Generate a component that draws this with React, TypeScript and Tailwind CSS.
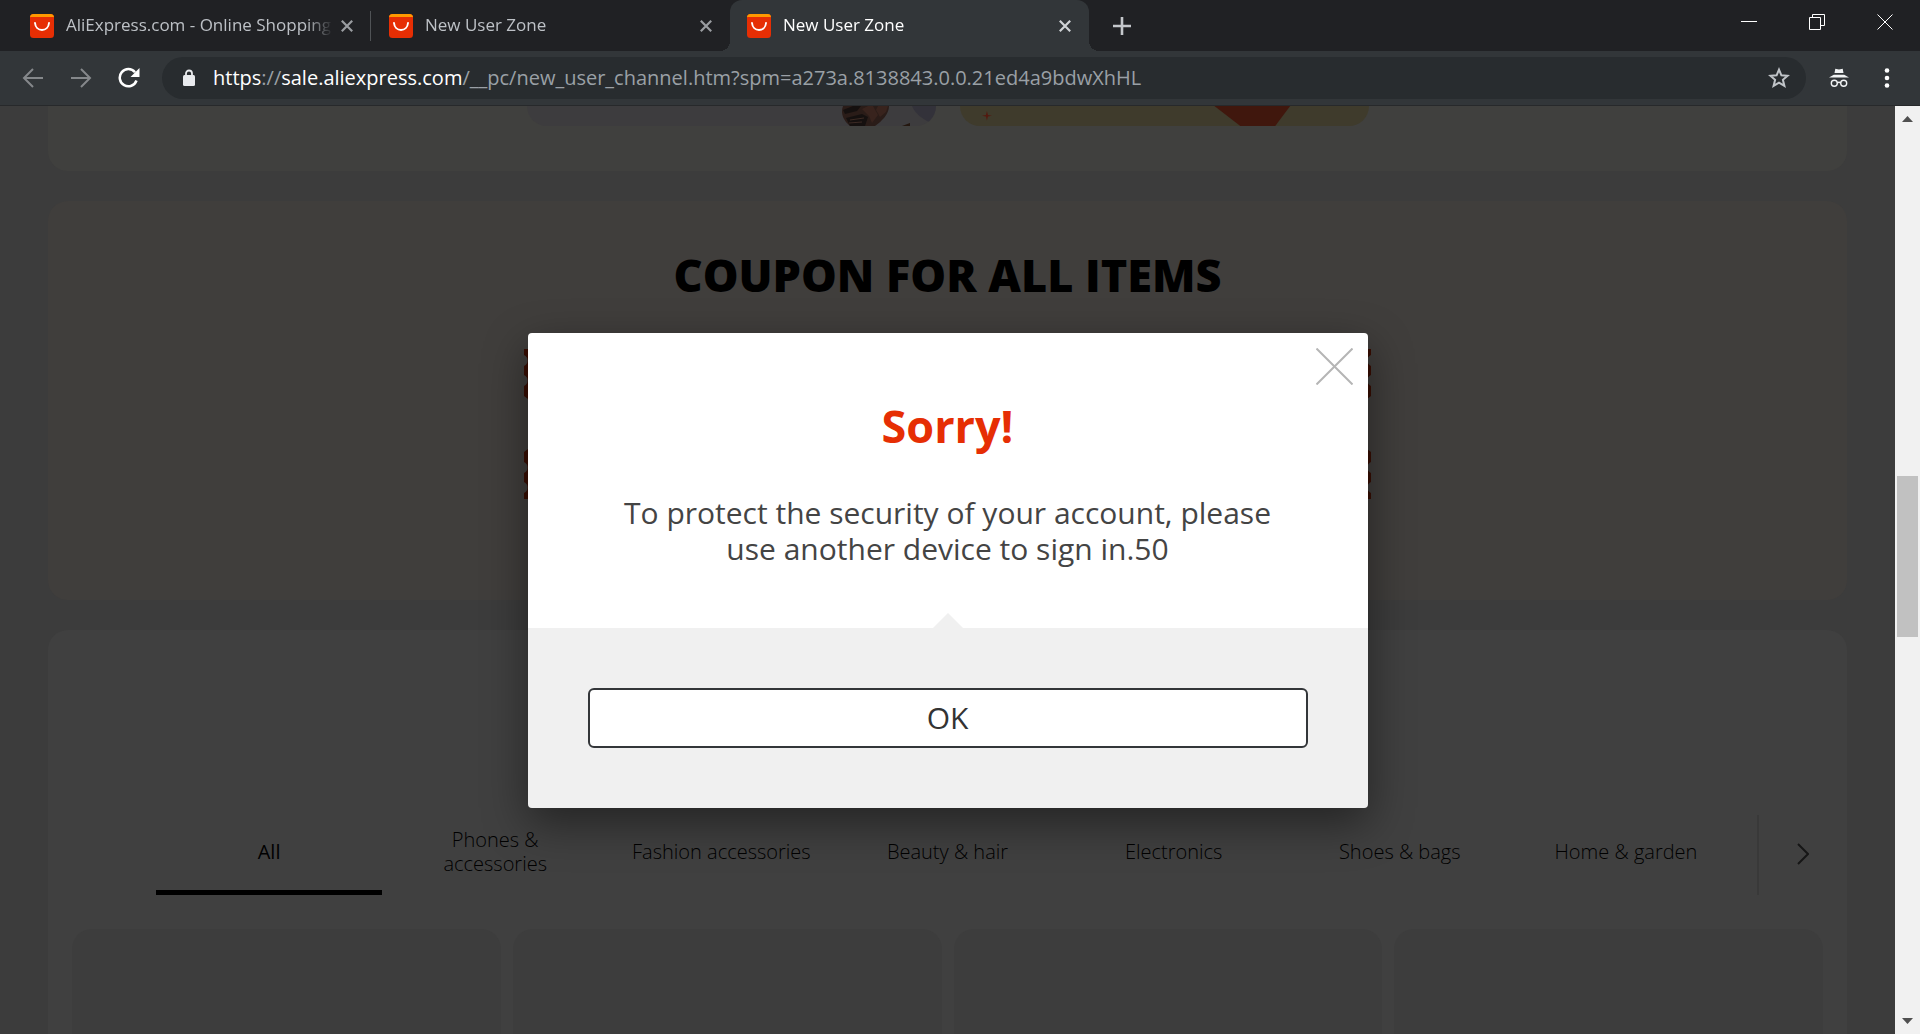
import { useState } from "react";

const categories = ["All", "Phones & accessories", "Fashion accessories", "Beauty & hair", "Electronics", "Shoes & bags", "Home & garden"];

function Favicon() {
  return (
    <svg className="size-6 shrink-0" viewBox="0 0 24 24" aria-hidden="true">
      <rect width="24" height="24" rx="3.5" fill="#e62e04" />
      <path d="M0 3.5A3.5 3.5 0 0 1 3.500 0h17A3.500 3.500 0 0 1 24 3.500C23.700 3 23 2.900 22 2.900H2C1 2.900.3 3 0 3.500z" fill="#ff9900" />
      <path d="M5 9c.4 4.300 3.300 7 7 7s6.600-2.700 7-7" fill="none" stroke="#fff" strokeWidth="1.900" strokeLinecap="round" />
    </svg>
  );
}

function Cross() {
  return (
    <svg className="size-3" viewBox="0 0 12 12" aria-hidden="true">
      <path d="M.8.8l10.400 10.400M11.200.8L.8 11.200" stroke="currentColor" strokeWidth="2.200" />
    </svg>
  );
}

function BrowserTab({ title, active = false, divider = false }: { title: string; active?: boolean; divider?: boolean }) {
  return (
    <div
      className={
        active
          ? "relative flex h-full w-[359px] items-center rounded-t-xl bg-[#323639] pr-[18px] pl-[17px] text-white"
          : "relative flex h-full w-[359px] items-center pr-[18px] pl-[18px] text-[#bdc1c6]"
      }
    >
      {active && (
        <>
          <span className="absolute bottom-0 -left-2.5 size-2.5 bg-[radial-gradient(circle_at_0_0,transparent_10px,#323639_10px)]" />
          <span className="absolute -right-2.5 bottom-0 size-2.5 bg-[radial-gradient(circle_at_100%_0,transparent_10px,#323639_10px)]" />
        </>
      )}
      <Favicon />
      <span className="ml-3 h-6 min-w-0 flex-1 overflow-hidden pb-0.5 text-[17px] leading-[22px] whitespace-nowrap [mask-image:linear-gradient(to_right,#000_90%,transparent)]">
        {title}
      </span>
      <button type="button" aria-label={`Close ${title}`} className={active ? "ml-2 text-[#d0d3d6]" : "ml-2 text-[#9a9da1]"}>
        <Cross />
      </button>
      {divider && <span className="absolute top-[11px] right-0 h-[30px] w-px bg-[#505356]" />}
    </div>
  );
}

function TitleBar() {
  return (
    <div className="flex h-[51px] shrink-0 items-center bg-[#202124] pl-3">
      <BrowserTab title="AliExpress.com - Online Shopping" divider />
      <BrowserTab title="New User Zone" />
      <BrowserTab title="New User Zone" active />
      <button type="button" aria-label="New tab" className="ml-6 text-[#c4c7cb]">
        <svg className="size-[18px]" viewBox="0 0 18 18" aria-hidden="true">
          <path d="M9 0v18M0 9h18" stroke="currentColor" strokeWidth="2.600" />
        </svg>
      </button>
      <div className="ml-auto flex items-center gap-[52px] pr-[27px] pb-2 text-white">
        <button type="button" aria-label="Minimize">
          <svg className="size-4" viewBox="0 0 16 16" aria-hidden="true"><path d="M0 7.500h16" stroke="currentColor" /></svg>
        </button>
        <button type="button" aria-label="Restore">
          <svg className="size-4" viewBox="0 0 16 16" fill="none" stroke="currentColor" aria-hidden="true">
            <path d="M.5 3.500h11v12H.5zM3.500 3.500v-3h12v11h-4" />
          </svg>
        </button>
        <button type="button" aria-label="Close window">
          <svg className="size-4" viewBox="0 0 16 16" aria-hidden="true"><path d="M.5.5l15 15M15.500.5l-15 15" stroke="currentColor" /></svg>
        </button>
      </div>
    </div>
  );
}

function Toolbar() {
  return (
    <div className="flex h-[55px] shrink-0 items-center border-b border-[#27292b] bg-[#323639] pr-[30px] pl-[22px]">
      <button type="button" aria-label="Back" className="text-[#85888b]">
        <svg className="size-[22px]" viewBox="0 0 22 22" fill="none" stroke="currentColor" strokeWidth="2" aria-hidden="true">
          <path d="M21 11H2.500M11 2l-9 9 9 9" />
        </svg>
      </button>
      <button type="button" aria-label="Forward" className="ml-[26px] text-[#85888b]">
        <svg className="size-[22px]" viewBox="0 0 22 22" fill="none" stroke="currentColor" strokeWidth="2" aria-hidden="true">
          <path d="M1 11h18.500M11 2l9 9-9 9" />
        </svg>
      </button>
      <button type="button" aria-label="Reload" className="ml-[26px] text-white">
        <svg className="size-[22px]" viewBox="0 0 22 22" aria-hidden="true">
          <path d="M18.500 13.500A8.600 8.600 0 1 1 17 5.200" fill="none" stroke="currentColor" strokeWidth="2.500" />
          <path d="M21.500 1v9h-9z" fill="currentColor" />
        </svg>
      </button>
      <div className="ml-[22px] flex h-[42px] flex-1 items-center rounded-full bg-[#282c2f] pr-4 pl-[21px]">
        <svg className="h-[18px] w-3 shrink-0 text-[#e8eaed]" viewBox="0 0 12 18" aria-hidden="true">
          <path d="M3 7V4.500a3 3 0 0 1 6 0V7" fill="none" stroke="currentColor" strokeWidth="1.800" />
          <rect y="6" width="12" height="11" rx="1.500" fill="currentColor" />
        </svg>
        <a href="#page" className="ml-[18px] flex-1 text-[20px] leading-7 whitespace-nowrap text-[#9aa0a6]">
          <span className="text-white">https</span>://<span className="text-white">sale.aliexpress.com</span>
          /__pc/new_user_channel.htm?spm=a273a.8138843.0.0.21ed4a9bdwXhHL
        </a>
        <button type="button" aria-label="Bookmark this page" className="text-[#c0c4c8]">
          <svg className="size-[22px]" viewBox="0 0 22 22" aria-hidden="true">
            <path d="M11 2.600l2.400 5.700 6.200.5-4.700 4 1.500 6.100-5.400-3.300-5.400 3.300 1.500-6.100-4.700-4 6.200-.5z" fill="none" stroke="currentColor" strokeWidth="2" />
          </svg>
        </button>
      </div>
      <svg className="ml-[23px] size-5 text-[#f1f3f4]" viewBox="0 0 20 20" aria-label="Incognito" role="img">
        <path d="M5.500 5L6.300.7 10 1.400l3.700-.7.800 4.300zM0 9.500L4.800 6.800h10.400L20 9.500z" fill="currentColor" />
        <g fill="none" stroke="currentColor" strokeWidth="1.400">
          <circle cx="5.300" cy="15.300" r="3" />
          <circle cx="14.700" cy="15.300" r="3" />
          <path d="M8.300 15c1-.8 2.400-.8 3.400 0" />
        </g>
      </svg>
      <button type="button" aria-label="Browser menu" className="ml-[35px] text-white">
        <svg className="h-5 w-1.5" viewBox="0 0 6 20" fill="currentColor" aria-hidden="true">
          <circle cx="3" cy="2.500" r="2.300" /><circle cx="3" cy="10" r="2.300" /><circle cx="3" cy="17.500" r="2.300" />
        </svg>
      </button>
    </div>
  );
}

function Banners() {
  return (
    <section className="flex h-[65px] justify-center gap-6 rounded-b-[20px] bg-[#40403e]">
      <div className="h-5 w-[409px] overflow-hidden rounded-b-[20px] bg-[#3d3c3e]">
        <svg className="ml-auto h-5 w-[110px]" viewBox="0 0 110 20" aria-hidden="true">
          <path d="M17 0h46c0 8-7 15-14 20H24C18 15 14 8 17 0z" fill="#2a1c18" />
          <path d="M17 4l10-4h8l-4 5-12 3zM20 12l16-4 6 3-3 9H24z" fill="#15100f" />
          <path d="M36 3l6-3h5l5 9-6 8-3-7zM52 0h10l-2 6-6 5-4-7z" fill="#38231d" />
          <path d="M24 14l14-2M23 17l13-1" stroke="#3c2a24" fill="none" />
          <path d="M86 0h24v8l-7 8C95 12 89 7 86 0z" fill="#33323a" />
          <path d="M76 20l8-3v3z" fill="#24170f" />
        </svg>
      </div>
      <div className="h-5 w-[409px] overflow-hidden rounded-b-[20px] bg-[#3f3b2c]">
        <svg className="h-5 w-full" viewBox="0 0 410 20" aria-hidden="true">
          <path d="M27 5l1 4 4 .8-4 .8-1 4-1-4-4-.8 4-.8z" fill="#54190f" />
          <path d="M255 0h76l-15 20h-35z" fill="#40170d" />
        </svg>
      </div>
    </section>
  );
}

function CouponEdge() {
  return (
    <svg className="h-[50px] w-full" viewBox="0 0 847 50" preserveAspectRatio="none" aria-hidden="true">
      <path d="M0 0h847v6a6 6 0 0 0 0 11v9a6 6 0 0 0 0 11v10l-4 3H4l-4-3V37a6 6 0 0 0 0-11v-9a6 6 0 0 0 0-11z" fill="#380d02" />
    </svg>
  );
}

function Coupons() {
  return (
    <section className="flex h-[399px] flex-col items-center rounded-[20px] bg-[#403e3c]">
      <h1 className="mt-11 text-[45px] leading-[60px] font-extrabold text-black">COUPON FOR ALL ITEMS</h1>
      <div className="mt-11 flex w-[847px] flex-col gap-[50px]">
        <CouponEdge />
        <div className="rotate-180"><CouponEdge /></div>
      </div>
    </section>
  );
}

function Products() {
  const [selected, setSelected] = useState("All");
  return (
    <section className="rounded-t-[20px] bg-[#404040] px-6 pt-[185px]">
      <div className="flex h-20 items-stretch pl-[84px]">
        <div className="grid flex-1 grid-cols-7" role="tablist">
          {categories.map((name) => (
            <button
              key={name}
              type="button"
              role="tab"
              aria-selected={selected === name}
              onClick={() => setSelected(name)}
              className={
                selected === name
                  ? "flex items-center justify-center border-b-[5px] border-black px-5 pb-0.5 text-[20px] leading-6 text-black"
                  : "flex items-center justify-center border-b-[5px] border-transparent px-5 pb-0.5 text-[20px] leading-6 font-light text-black"
              }
            >
              <span className="max-w-[186px] text-center">{name}</span>
            </button>
          ))}
        </div>
        <button type="button" aria-label="More categories" className="ml-[18px] flex w-[66px] items-center justify-center border-l-2 border-[#393939] pb-0.5 pl-6 text-[#161616]">
          <svg className="h-[22px] w-3" viewBox="0 0 12 22" aria-hidden="true">
            <path d="M1 1l10 10L1 21" fill="none" stroke="currentColor" strokeWidth="2" />
          </svg>
        </button>
      </div>
      <div className="mt-[34px] grid grid-cols-4 gap-3">
        {[0, 1, 2, 3].map((n) => (
          <div key={n} className="h-[420px] rounded-[20px] bg-[#3d3d3d]" />
        ))}
      </div>
    </section>
  );
}

function SecurityDialog() {
  return (
    <div
      role="dialog"
      aria-modal="true"
      aria-labelledby="dialog-title"
      className="absolute top-[227px] left-1/2 w-[840px] -translate-x-1/2 overflow-hidden rounded-sm text-center shadow-[0_15px_45px_rgba(0,0,0,0.45)]"
    >
      <div className="relative h-[295px] bg-white px-[90px] pt-[63px] text-[#444]">
        <button type="button" aria-label="Close" className="absolute top-[15px] right-[15px] text-[#b5b5b5]">
          <svg className="size-[37px]" viewBox="0 0 37 37" aria-hidden="true">
            <path d="M.5.5l36 36M36.500.5l-36 36" stroke="currentColor" strokeWidth="2" />
          </svg>
        </button>
        <h2 id="dialog-title" className="text-[45px] leading-[60px] font-bold text-[#e62e04]">Sorry!</h2>
        <p className="mt-[39px] text-[30px] leading-9">To protect the security of your account, please use another device to sign in.50</p>
        <svg className="absolute bottom-0 left-1/2 h-[15px] w-[30px] -translate-x-1/2" viewBox="0 0 30 15" aria-hidden="true">
          <path d="M0 15L15 0l15 15z" fill="#f0f0f0" />
        </svg>
      </div>
      <div className="bg-[#f0f0f0] p-[60px]">
        <button type="button" className="h-[60px] w-full rounded-md border-2 border-[#333639] bg-white text-[30px] leading-9 text-[#333]">OK</button>
      </div>
    </div>
  );
}

function ScrollBar() {
  return (
    <div className="flex w-[25px] shrink-0 flex-col items-center bg-[#f1f1f1] py-2.5">
      <svg className="h-1.5 w-[11px]" viewBox="0 0 11 6" aria-hidden="true"><path d="M0 6L5.500 0 11 6z" fill="#505050" /></svg>
      <div className="mt-[354px] h-[161px] w-[21px] bg-[#c1c1c1]" />
      <svg className="mt-auto h-1.5 w-[11px]" viewBox="0 0 11 6" aria-hidden="true"><path d="M0 0l5.500 6L11 0z" fill="#505050" /></svg>
    </div>
  );
}

export default function App() {
  return (
    <div className="flex h-screen flex-col overflow-hidden font-['Open_Sans','Noto_Sans',sans-serif]">
      <header>
        <TitleBar />
        <Toolbar />
      </header>
      <div className="flex min-h-0 flex-1">
        <main id="page" className="relative min-w-0 flex-1 overflow-hidden bg-[#3c3c3c] px-12">
          <div className="flex flex-col gap-[30px]">
            <Banners />
            <Coupons />
            <Products />
          </div>
          <SecurityDialog />
        </main>
        <ScrollBar />
      </div>
    </div>
  );
}
